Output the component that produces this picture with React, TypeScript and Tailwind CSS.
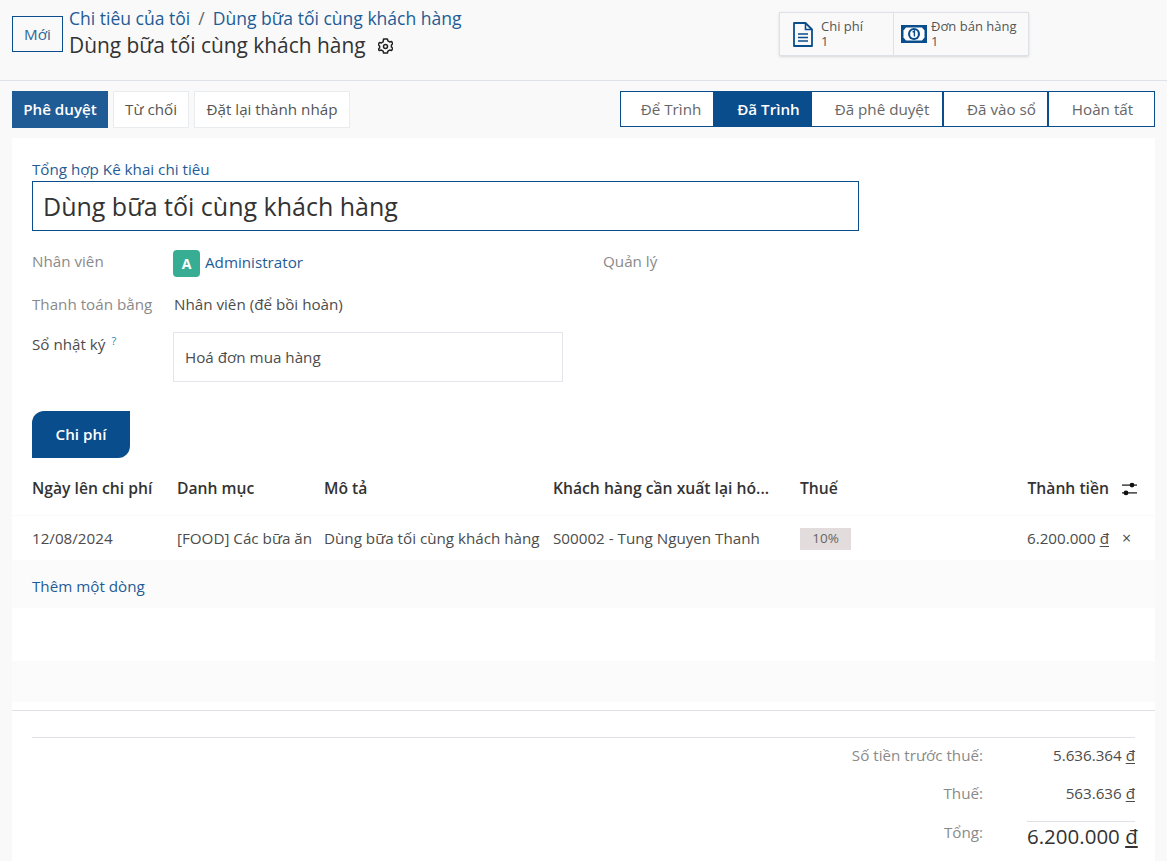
const font = '[font-family:"Open_Sans",sans-serif]';

function Gear() {
  return (
    <svg width="15" height="17" viewBox="0 0 15 17" fill="none" stroke="#222" strokeWidth="1.500" strokeLinejoin="round">
      <path d="M5.600 1h3.800l.5 1.900 1.700 1 1.900-.5 1.300 2.300-1.400 1.300v2l1.400 1.300-1.300 2.300-1.900-.5-1.700 1-.5 1.900H5.600l-.5-1.900-1.700-1-1.900.5L.2 11.300l1.400-1.300v-2L.2 6.700l1.300-2.300 1.900.5 1.700-1z" />
      <circle cx="7.500" cy="8.500" r="2" />
    </svg>
  );
}

function DocIcon() {
  return (
    <svg width="20" height="25" viewBox="0 0 20 25" fill="none" stroke="#0a4d8c">
      <path d="M1 1h11.500L19 7.500V24H1z" strokeWidth="1.800" strokeLinejoin="round" />
      <path d="M12.500 1v6.500H19" strokeWidth="1.600" />
      <path d="M5 12h10M5 15.500h10M5 19h10" strokeWidth="1.600" />
    </svg>
  );
}

function MoneyIcon() {
  return (
    <svg width="26" height="18" viewBox="0 0 26 18">
      <rect width="26" height="18" fill="#0a4d8c" />
      <path d="M5 2.500h16l2.500 3v7L21 15.500H5l-2.500-3v-7z" fill="#fff" />
      <circle cx="13" cy="9" r="6" fill="#0a4d8c" />
      <circle cx="13" cy="9" r="3.900" fill="#fff" />
      <path d="M11.600 7.300l1.800-1.300v5.500" fill="none" stroke="#0a4d8c" strokeWidth="1.400" />
    </svg>
  );
}

function Sliders() {
  return (
    <svg width="15" height="14" viewBox="0 0 15 14" fill="#111" className="block">
      <rect x="0" y="2.500" width="15" height="1.200" />
      <rect x="0" y="10.300" width="15" height="1.200" />
      <circle cx="10" cy="3.100" r="2.400" />
      <circle cx="4" cy="10.900" r="2.400" />
    </svg>
  );
}

function Dong() {
  return <span className="underline underline-offset-2">đ</span>;
}

const stages = [
  { label: 'Để Trình', className: 'w-[94px] pl-2', active: false },
  { label: 'Đã Trình', className: 'w-[97px] pl-3', active: true },
  { label: 'Đã phê duyệt', className: 'w-[132px] pl-2.5', active: false },
  { label: 'Đã vào sổ', className: 'w-[105px] pl-3', active: false },
  { label: 'Hoàn tất', className: 'w-[107px] pl-[2px]', active: false },
];

export default function App() {
  return (
    <div className={`${font} h-[861px] overflow-hidden bg-[#f9f9f9] text-[15.2px] text-[#4c4c4c]`}>
      <header className="relative h-[81px] border-b border-[#dee2e6] pl-3">
        <div className="flex items-start">
          <button className="mt-4 flex h-9 w-[51px] items-center justify-center border border-[#0a4d8c] text-[#2e6597]">
            Mới
          </button>
          <div className="ml-1.5 mt-[5px]">
            <div className="flex h-[27px] items-center text-[17.55px] text-[#1f5c96]">
              <span>Chi tiêu của tôi</span>
              <span className="mx-2 text-[#666]">/</span>
              <span>Dùng bữa tối cùng khách hàng</span>
            </div>
            <div className="flex h-[28px] items-center text-[20.900px] text-[#333]">
              <span>Dùng bữa tối cùng khách hàng</span>
              <span className="ml-3"><Gear /></span>
            </div>
          </div>
        </div>
        <div className="absolute left-[779px] top-3 flex h-11 border border-[#dee2e6] text-[13px] leading-[15px] text-[#555] shadow-sm">
          <div className="flex w-[114px] items-center border-r border-[#dee2e6] pl-[13px]">
            <DocIcon />
            <div className="ml-2">Chi phí<br />1</div>
          </div>
          <div className="flex w-[134px] items-center pl-[7px]">
            <MoneyIcon />
            <div className="ml-1">Đơn bán hàng<br />1</div>
          </div>
        </div>
      </header>

      <div className="flex items-start justify-between px-3 pt-2.5">
        <div className="flex gap-[5px]">
          <button className="h-[37px] w-24 bg-[#1f5c96] font-semibold text-white">Phê duyệt</button>
          <button className="h-[37px] w-[76px] border border-[#e9ecef] bg-white text-[#555]">Từ chối</button>
          <button className="h-[37px] w-[156px] border border-[#e9ecef] bg-white text-[#555]">Đặt lại thành nháp</button>
        </div>
        <div className="flex h-9">
          {stages.map((s) => (
            <div
              key={s.label}
              className={`flex items-center justify-center border border-[#0a4d8c] ${s.className} ${
                s.active ? 'bg-[#0a4d8c] font-semibold text-white' : 'bg-white text-[#666]'
              }`}
            >
              {s.label}
            </div>
          ))}
        </div>
      </div>

      <main className="mx-3 mt-2.5 h-[723px] bg-white">
        <div className="px-5 pt-[21px]">
          <div className="h-[22px] leading-[21px] text-[#1f5c96]">Tổng hợp Kê khai chi tiêu</div>
          <div className="flex h-[50px] w-[827px] items-center border border-[#0a4d8c] pl-[10px] pt-[2px] text-[25px] text-[#333]">
            Dùng bữa tối cùng khách hàng
          </div>

          <div className="mt-[18px] flex h-7 items-center">
            <span className="w-[141px] pb-[3px] text-[#8a8a8a]">Nhân viên</span>
            <span className="flex h-[27px] w-[27px] items-center justify-center rounded bg-[#37ae93] text-[14px] font-bold text-white">A</span>
            <span className="ml-[5px] w-[398px] pb-[2px] text-[#1f5c96]">Administrator</span>
            <span className="pb-[3px] text-[#8a8a8a]">Quản lý</span>
          </div>
          <div className="mt-[13px] flex h-7 items-center">
            <span className="w-[142px] text-[#8a8a8a]">Thanh toán bằng</span>
            <span>Nhân viên (để bồi hoàn)</span>
          </div>
          <div className="mt-[14px] flex items-start">
            <span className="w-[141px] pt-[1px]">
              Sổ nhật ký <sup className="ml-[2px] text-[11px] text-[#1c8bb3]">?</sup>
            </span>
            <div className="flex h-[50px] w-[390px] items-center border border-[#e3e5ea] pl-[11px]">Hoá đơn mua hàng</div>
          </div>

          <div className="mt-[29px] flex h-[47px] w-[98px] items-center justify-center rounded-tl-[12px] rounded-br-[12px] bg-[#0a4d8c] font-semibold text-white">
            Chi phí
          </div>
        </div>

        <div className="flex h-[57px] items-center pl-5 pr-[18px] pt-[5px] text-[15.700px] font-semibold text-[#333]">
          <span className="w-[145px]">Ngày lên chi phí</span>
          <span className="w-[147px]">Danh mục</span>
          <span className="w-[229px]">Mô tả</span>
          <span className="w-[247px] whitespace-nowrap">Khách hàng cần xuất lại hó...</span>
          <span className="w-[80px]">Thuế</span>
          <span className="flex-1 text-right">Thành tiền</span>
          <span className="ml-[13px] w-[15px]"><Sliders /></span>
        </div>
        <div className="flex h-[45px] items-center border-t border-[#fafafa] pl-5 pr-[18px]">
          <span className="w-[145px]">12/08/2024</span>
          <span className="w-[147px]">[FOOD] Các bữa ăn</span>
          <span className="w-[229px] whitespace-nowrap">Dùng bữa tối cùng khách hàng</span>
          <span className="w-[247px] whitespace-nowrap">S00002 - Tung Nguyen Thanh</span>
          <span className="mt-[1px] flex h-[22px] w-[51px] items-center justify-center bg-[#e3dcdc] text-[13.500px] text-[#666]">10%</span>
          <span className="flex-1 text-right">6.200.000 <Dong /></span>
          <span className="ml-[13px] w-[15px] text-[16px]">×</span>
        </div>
        <div className="flex h-12 items-center bg-[#fbfbfb] px-5 pt-[5px] text-[#1f5c96]">Thêm một dòng</div>
        <div className="h-[53px]" />
        <div className="h-[41px] bg-[#fbfbfb]" />

        <div className="mt-[8px] border-t border-[#dee2e6] px-5 pt-[26px]">
          <div className="border-t border-[#dee2e6]">
            <div className="flex h-[34px] items-center justify-end">
              <span className="text-[#8a8a8a]">Số tiền trước thuế:</span>
              <span className="w-[152px] text-right">5.636.364 <Dong /></span>
            </div>
            <div className="flex h-[42px] items-center justify-end">
              <span className="text-[#8a8a8a]">Thuế:</span>
              <span className="w-[152px] text-right">563.636 <Dong /></span>
            </div>
            <div className="flex items-start justify-end">
              <span className="pt-[7px] text-[#8a8a8a]">Tổng:</span>
              <span className="ml-[44px] mt-[7px] w-[108px] whitespace-nowrap border-t border-[#dee2e6] text-right text-[20.500px] leading-[29px] text-[#333]">
                6.200.000 <Dong />
              </span>
            </div>
          </div>
        </div>
      </main>
    </div>
  );
}
